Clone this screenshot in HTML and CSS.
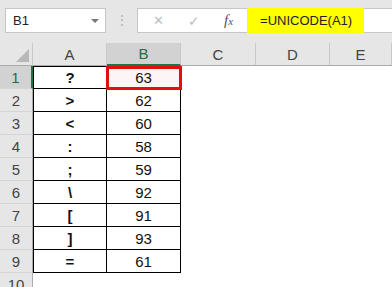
FILE: index.html
```html
<!DOCTYPE html>
<html lang="en">
<head>
	<meta charset="UTF-8">
	<title>UNICODE</title>
	<link rel="stylesheet" href="styles.css">
</head>
<body>

<div class="bar">
	<div class="namebox">
		<span>B1</span>
		<span class="arrow"></span>
	</div>
	<div class="dots">&#8942;</div>
	<div class="formula">
		<span class="ico x">&#10005;</span>
		<span class="ico ok">&#10003;</span>
		<span class="fx"><i>f</i><i class="small">x</i></span>
		<span class="expr">=UNICODE(A1)</span>
	</div>
</div>

<div class="sheet">
	<div class="hd corner"><span class="tri"></span></div>
	<div class="hd col">A</div>
	<div class="hd col sel">B</div>
	<div class="hd col">C</div>
	<div class="hd col">D</div>
	<div class="hd col">E</div>

	<div class="hd row sel">1</div>
	<div class="c t a top">?</div>
	<div class="c t top active">63</div>
	<div class="c"></div><div class="c"></div><div class="c"></div>

	<div class="hd row">2</div>
	<div class="c t a">&gt;</div>
	<div class="c t">62</div>
	<div class="c"></div><div class="c"></div><div class="c"></div>

	<div class="hd row">3</div>
	<div class="c t a">&lt;</div>
	<div class="c t">60</div>
	<div class="c"></div><div class="c"></div><div class="c"></div>

	<div class="hd row">4</div>
	<div class="c t a">:</div>
	<div class="c t">58</div>
	<div class="c"></div><div class="c"></div><div class="c"></div>

	<div class="hd row">5</div>
	<div class="c t a">;</div>
	<div class="c t">59</div>
	<div class="c"></div><div class="c"></div><div class="c"></div>

	<div class="hd row">6</div>
	<div class="c t a">\</div>
	<div class="c t">92</div>
	<div class="c"></div><div class="c"></div><div class="c"></div>

	<div class="hd row">7</div>
	<div class="c t a">[</div>
	<div class="c t">91</div>
	<div class="c"></div><div class="c"></div><div class="c"></div>

	<div class="hd row">8</div>
	<div class="c t a">]</div>
	<div class="c t">93</div>
	<div class="c"></div><div class="c"></div><div class="c"></div>

	<div class="hd row">9</div>
	<div class="c t a">=</div>
	<div class="c t">61</div>
	<div class="c"></div><div class="c"></div><div class="c"></div>

	<div class="hd row">10</div>
	<div class="c"></div><div class="c"></div><div class="c"></div><div class="c"></div><div class="c"></div>
</div>

</body>
</html>
```

FILE: styles.css
```css
body{
	margin: 0;
	background: #fff;
	font-family: "Liberation Sans", Arial, sans-serif;
	overflow: hidden;
}

/* formula bar */
.bar{
	height: 43px;
	background: #e6e6e6;
	display: flex;
	align-items: flex-start;
	padding: 8px 0 0 5px;
	box-sizing: border-box;
}
.namebox{
	width: 101px;
	height: 25px;
	box-sizing: border-box;
	background: #fff;
	border: 1px solid #c6c6c6;
	display: flex;
	align-items: center;
	justify-content: space-between;
	padding: 0 6px 0 7px;
	font-size: 13px;
	color: #222;
}
.arrow{
	width: 0;
	height: 0;
	border-left: 4px solid transparent;
	border-right: 4px solid transparent;
	border-top: 4px solid #777;
}
.dots{
	width: 31px;
	text-align: center;
	color: #b4b4b4;
	font-size: 14px;
	line-height: 25px;
}
.formula{
	flex: 1;
	height: 25px;
	box-sizing: border-box;
	background: #fff;
	border: 1px solid #c6c6c6;
	border-right: 0;
	display: flex;
	align-items: center;
}
.ico{
	color: #bdbdbd;
	font-size: 13px;
}
.x{ margin-left: 15px; }
.ok{ margin-left: 24px; font-size: 14px; }
.fx{
	margin-left: 24px;
	font-family: "Liberation Serif", serif;
	font-size: 15px;
	color: #555;
}
.fx .small{ font-size: 11px; }
.expr{
	margin-left: 14px;
	height: 25px;
	line-height: 25px;
	background: #ffff00;
	padding: 0 12px 0 13px;
	font-size: 13px;
	color: #222;
}

/* sheet */
.sheet{
	display: grid;
	grid-template-columns: 33px 74px 74px 75px 74px 1fr;
	grid-auto-rows: 23px;
}
.hd{
	background: #e6e6e6;
	color: #444;
	font-size: 15px;
	display: flex;
	align-items: center;
	justify-content: center;
	box-sizing: border-box;
}
.col{
	border-right: 1px solid #c8c8c8;
	border-bottom: 1px solid #ababab;
}
.row{
	border-right: 1px solid #ababab;
	border-bottom: 1px solid #d4d4d4;
}
.corner{
	border-right: 1px solid #c8c8c8;
	border-bottom: 1px solid #ababab;
	position: relative;
}
.tri{
	position: absolute;
	right: 3px;
	bottom: 3px;
	width: 0;
	height: 0;
	border-left: 13px solid transparent;
	border-bottom: 13px solid #b8b8b8;
}
.hd.sel{
	background: #d2d2d2;
	color: #1e6e42;
}
.row.sel{
	border-right: 2px solid #217346;
}
.col.sel{
	border-bottom: 2px solid #217346;
}

.c{
	font-size: 15px;
	color: #111;
	display: flex;
	align-items: center;
	justify-content: center;
	box-sizing: border-box;
}
.t{
	border-right: 1px solid #000;
	border-bottom: 1px solid #000;
}
.a{
	font-weight: bold;
	border-left: 1px solid #000;
}
.top{
	border-top: 1px solid #000;
}
.active{
	position: relative;
	background: #fdf5f5;
}
.active:after{
	content: "";
	position: absolute;
	left: -1px;
	top: -1px;
	right: -2px;
	bottom: -2px;
	border: 3px solid #e01010;
}
```
